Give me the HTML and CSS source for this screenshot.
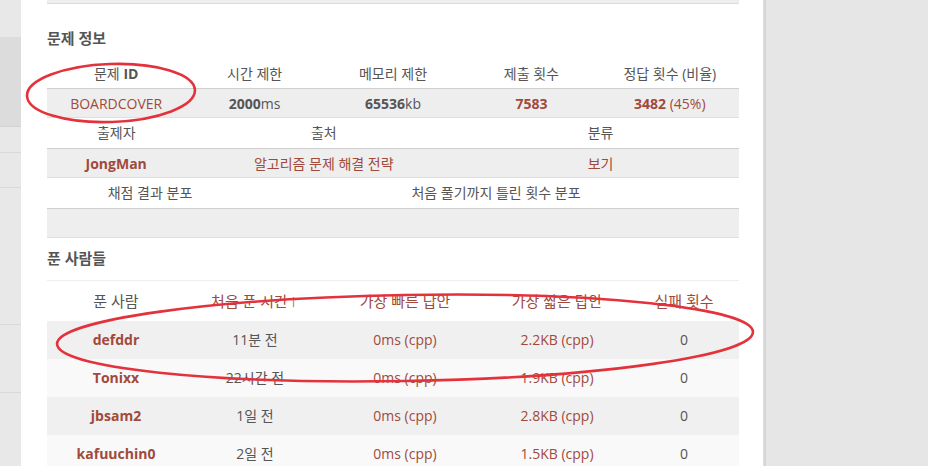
FILE: index.html
```html
<!DOCTYPE html>
<html lang="ko">
<head>
<meta charset="utf-8">
<title>BOARDCOVER</title>
<link rel="stylesheet" href="styles.css">
</head>
<body>
<div class="page">
  <aside class="sidebar">
    <div class="side-top"></div>
    <div class="side-active"></div>
    <div class="side-item s1"></div>
    <div class="side-item s2"></div>
    <div class="side-item s3"></div>
    <div class="side-item s4"></div>
  </aside>
  <main class="main">
    <div class="topbox"></div>
    <h3 class="section-title first">문제 정보</h3>
    <div class="info">
      <div class="row cols5 head">
        <div>문제 <b>ID</b></div><div>시간 제한</div><div>메모리 제한</div><div>제출 횟수</div><div>정답 횟수 (비율)</div>
      </div>
      <div class="row cols5 data">
        <div><a class="link">BOARDCOVER</a></div>
        <div><b>2000</b>ms</div>
        <div><b>65536</b>kb</div>
        <div><b class="link">7583</b></div>
        <div class="link"><b>3482</b> (45%)</div>
      </div>
      <div class="row cols3 head">
        <div>출제자</div><div>출처</div><div>분류</div>
      </div>
      <div class="row cols3 data">
        <div><b class="link">JongMan</b></div>
        <div><a class="link">알고리즘 문제 해결 전략</a></div>
        <div><a class="link">보기</a></div>
      </div>
      <div class="row cols2 head">
        <div>채점 결과 분포</div><div>처음 풀기까지 틀린 횟수 분포</div>
      </div>
      <div class="row cols2 data empty">
        <div></div><div></div>
      </div>
    </div>
    <h3 class="section-title second">푼 사람들</h3>
    <div class="solvers">
      <div class="srow shead">
        <div>푼 사람</div>
        <div class="link">처음 푼 시간<span class="arrow">↑</span></div>
        <div class="link">가장 빠른 답안</div>
        <div class="link">가장 짧은 답안</div>
        <div class="link">실패 횟수</div>
      </div>
      <div class="srow odd">
        <div><b class="link">defddr</b></div><div>11분 전</div><div class="link">0ms (cpp)</div><div class="link">2.2KB (cpp)</div><div>0</div>
      </div>
      <div class="srow even">
        <div><b class="link">Tonixx</b></div><div>22시간 전</div><div class="link">0ms (cpp)</div><div class="link">1.9KB (cpp)</div><div>0</div>
      </div>
      <div class="srow odd">
        <div><b class="link">jbsam2</b></div><div>1일 전</div><div class="link">0ms (cpp)</div><div class="link">2.8KB (cpp)</div><div>0</div>
      </div>
      <div class="srow even">
        <div><b class="link">kafuuchin0</b></div><div>2일 전</div><div class="link">0ms (cpp)</div><div class="link">1.5KB (cpp)</div><div>0</div>
      </div>
    </div>
  </main>
  <div class="edge"></div>
  <div class="rightbg"></div>
</div>
<svg class="marks" width="928" height="466" viewBox="0 0 928 466" aria-hidden="true">
  <ellipse cx="111" cy="93" rx="84" ry="29" transform="rotate(-2 111 93)"/>
  <ellipse cx="405" cy="338" rx="348" ry="43" transform="rotate(-1 405 338)"/>
</svg>
</body>
</html>
```
FILE: styles.css
```css
* { box-sizing: border-box; }
html, body { margin: 0; padding: 0; }
body {
  width: 928px;
  height: 466px;
  overflow: hidden;
  position: relative;
  font-family: "Open Sans", "Noto Sans CJK KR", sans-serif;
  font-size: 14px;
  color: #555;
  background: #e6e6e6;
}
.page { display: flex; height: 466px; }
.sidebar {
  width: 21px;
  background: #e8e8e8;
  display: flex;
  flex-direction: column;
}
.side-top { height: 37px; }
.side-active { height: 90px; background: #dcdcdc; border-bottom: 1px solid #d2d2d2; }
.side-item { border-bottom: 1px solid #d8d8d8; }
.s1 { height: 26px; }
.s2 { height: 35px; }
.s3 { height: 137px; }
.s4 { height: 68px; }
.main {
  width: 742px;
  background: #fff;
  padding: 0 24px 0 26px;
}
.edge {
  width: 3px;
  background: linear-gradient(to right, #e2e2e2, #cfcfcf);
}
.rightbg { flex: 1; background: #e6e6e6; }
.topbox {
  height: 4px;
  background: #eee;
  border-bottom: 1px solid #dcdcdc;
}
.section-title {
  margin: 0;
  font-size: 15px;
  font-weight: bold;
  color: #555;
  line-height: 20px;
}
.section-title.first { margin-top: 24px; }
.section-title.second { margin-top: 10px; height: 33px; border-bottom: 1px solid #eee; }
.info { margin-top: 10px; }
.row { display: grid; text-align: center; height: 30px; line-height: 29px; }
.row.head:first-child { line-height: 32px; }
.cols5 { grid-template-columns: repeat(5, 1fr); }
.cols3 { grid-template-columns: 138.4px 1fr 1fr; }
.cols2 { grid-template-columns: 206px 1fr; }
.row.data { background: #eee; border-top: 1px solid #cfcfcf; border-bottom: 1px solid #e0e0e0; }
b { font-weight: bold; }
.link { color: #a04a3c; text-decoration: none; }
.srow {
  display: grid;
  grid-template-columns: 138px 140px 160px 144px 110px;
  text-align: center;
  height: 38px;
  line-height: 38px;
}
.shead { height: 40px; line-height: 40px; font-size: 15px; }
.arrow { font-size: 11px; }
.srow.odd { background: #f0f0f0; }
.srow.even { background: #f9f9f9; }
.marks {
  position: absolute;
  left: 0;
  top: 0;
  pointer-events: none;
}
.marks ellipse { fill: none; stroke: #e3323b; stroke-width: 2.6; }
```
